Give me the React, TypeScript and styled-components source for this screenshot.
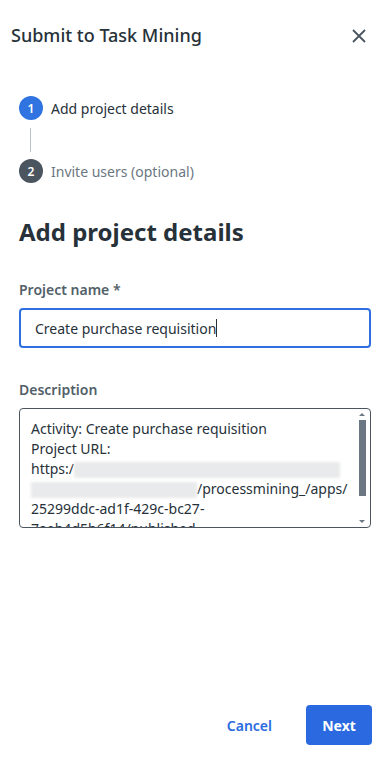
import styled, { createGlobalStyle } from "styled-components";

const GlobalStyle = createGlobalStyle`
  html, body {
    margin: 0;
    padding: 0;
    background: #ffffff;
  }
  body {
    font-family: "Noto Sans", "Open Sans", sans-serif;
    color: #273139;
  }
`;

const Panel = styled.div`
  width: 388px;
  height: 780px;
  display: flex;
  flex-direction: column;
  box-sizing: border-box;
`;

const Header = styled.header`
  height: 72px;
  display: flex;
  align-items: center;
  justify-content: space-between;
  padding: 0 22px 0 11px;
`;

const Title = styled.h1`
  margin: 0 0 2px;
  font-size: 18px;
  font-weight: 500;
  color: #273139;
`;

const CloseButton = styled.button`
  border: none;
  background: none;
  padding: 0;
  width: 14px;
  height: 14px;
  display: flex;
  cursor: pointer;
`;

const Body = styled.main`
  flex: 1;
  padding: 24px 17px 0 19px;
  display: flex;
  flex-direction: column;
`;

const Stepper = styled.ol`
  list-style: none;
  margin: 0;
  padding: 0;
  display: flex;
  flex-direction: column;
`;

const Step = styled.li`
  display: flex;
  align-items: center;
  gap: 8px;
  height: 24px;
`;

const StepBadge = styled.span<{ $active?: boolean }>`
  width: 24px;
  height: 24px;
  border-radius: 50%;
  display: flex;
  align-items: center;
  justify-content: center;
  font-size: 12px;
  font-weight: 600;
  color: #ffffff;
  background: ${(p) => (p.$active ? "#2f74e0" : "#4b555f")};
`;

const StepLabel = styled.span<{ $active?: boolean }>`
  font-size: 14px;
  color: ${(p) => (p.$active ? "#273139" : "#6b7782")};
`;

const Connector = styled.div`
  width: 1px;
  height: 24px;
  margin: 8px 0 7px 11px;
  background: #b9c0c6;
`;

const Heading = styled.h2`
  margin: 32px 0 0;
  font-size: 24px;
  line-height: 34px;
  font-weight: 700;
  color: #273139;
`;

const Field = styled.div<{ $top: number }>`
  display: flex;
  flex-direction: column;
  margin-top: ${(p) => p.$top}px;
`;

const Label = styled.label`
  font-size: 14px;
  font-weight: 600;
  line-height: 20px;
  color: #526069;
  margin-bottom: 8px;
`;

const TextInput = styled.div`
  height: 40px;
  box-sizing: border-box;
  border: 2px solid #2f6fe0;
  border-radius: 4px;
  display: flex;
  align-items: center;
  padding-left: 14px;
  font-size: 14px;
  color: #273139;
`;

const Caret = styled.span`
  display: inline-block;
  width: 1px;
  height: 18px;
  background: #273139;
  vertical-align: middle;
`;

const TextArea = styled.div`
  position: relative;
  height: 120px;
  box-sizing: border-box;
  border: 1px solid #4b555f;
  border-radius: 4px;
  padding: 10px 20px 0 11px;
  overflow: hidden;
  font-size: 14px;
  line-height: 20px;
  color: #273139;
`;

const Line = styled.div`
  white-space: nowrap;
`;

const Blurred = styled.span<{ $w: number }>`
  display: inline-block;
  width: ${(p) => p.$w}px;
  height: 16px;
  vertical-align: middle;
  background: #e9eaeb;
  filter: blur(1.5px);
`;

const ScrollTrack = styled.div`
  position: absolute;
  top: 4px;
  bottom: 4px;
  right: 4px;
  width: 8px;
  display: flex;
  flex-direction: column;
  align-items: center;
  justify-content: space-between;
`;

const Arrow = styled.span<{ $down?: boolean }>`
  width: 0;
  height: 0;
  border-left: 3px solid transparent;
  border-right: 3px solid transparent;
  ${(p) =>
    p.$down
      ? "border-top: 3px solid #6b7782;"
      : "border-bottom: 3px solid #6b7782;"}
`;

const Thumb = styled.div`
  width: 7px;
  height: 76px;
  background: #6b7782;
  margin-bottom: auto;
  margin-top: 4px;
`;

const Footer = styled.footer`
  display: flex;
  justify-content: flex-end;
  align-items: center;
  gap: 34px;
  padding: 0 16px 35px 0;
`;

const TextButton = styled.button`
  border: none;
  background: none;
  font-family: inherit;
  font-size: 14px;
  font-weight: 600;
  color: #2a6ae0;
  padding: 0;
  cursor: pointer;
`;

const PrimaryButton = styled.button`
  width: 66px;
  height: 40px;
  border: none;
  border-radius: 4px;
  background: #2a69df;
  color: #ffffff;
  font-family: inherit;
  font-size: 14px;
  font-weight: 700;
  cursor: pointer;
`;

const App = () => {
  return (
    <>
      <GlobalStyle />
      <Panel>
        <Header>
          <Title>Submit to Task Mining</Title>
          <CloseButton aria-label="Close">
            <svg width="14" height="14" viewBox="0 0 14 14">
              <path d="M1 1L13 13M13 1L1 13" stroke="#4b555f" strokeWidth="1.8" />
            </svg>
          </CloseButton>
        </Header>
        <Body>
          <Stepper>
            <Step>
              <StepBadge $active>1</StepBadge>
              <StepLabel $active>Add project details</StepLabel>
            </Step>
            <Connector />
            <Step>
              <StepBadge>2</StepBadge>
              <StepLabel>Invite users (optional)</StepLabel>
            </Step>
          </Stepper>

          <Heading>Add project details</Heading>

          <Field $top={31}>
            <Label>Project name *</Label>
            <TextInput>
              Create purchase requisition
              <Caret />
            </TextInput>
          </Field>

          <Field $top={32}>
            <Label>Description</Label>
            <TextArea>
              <Line>Activity: Create purchase requisition</Line>
              <Line>Project URL:</Line>
              <Line>
                https:/<Blurred $w={266} />
              </Line>
              <Line>
                <Blurred $w={166} />/processmining_/apps/
              </Line>
              <Line>25299ddc-ad1f-429c-bc27-</Line>
              <Line>7aeb4d5b6f14/published</Line>
              <ScrollTrack>
                <Arrow />
                <Thumb />
                <Arrow $down />
              </ScrollTrack>
            </TextArea>
          </Field>
        </Body>
        <Footer>
          <TextButton>Cancel</TextButton>
          <PrimaryButton>Next</PrimaryButton>
        </Footer>
      </Panel>
    </>
  );
};

export default App;
